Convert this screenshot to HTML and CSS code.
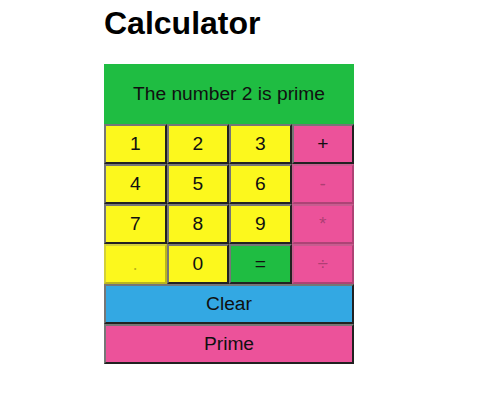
FILE: index.html
```html
<!DOCTYPE html>
<html lang="en">
<head>
<meta charset="utf-8">
<title>Calculator</title>
<link rel="stylesheet" href="styles.css">
</head>
<body>
<main class="app">
  <h1 class="title">Calculator</h1>
  <div class="calc">
    <div class="display">The number 2 is prime</div>
    <div class="keys">
      <button class="key num">1</button>
      <button class="key num">2</button>
      <button class="key num">3</button>
      <button class="key op">+</button>
      <button class="key num">4</button>
      <button class="key num">5</button>
      <button class="key num">6</button>
      <button class="key op" disabled>-</button>
      <button class="key num">7</button>
      <button class="key num">8</button>
      <button class="key num">9</button>
      <button class="key op" disabled>*</button>
      <button class="key num" disabled>.</button>
      <button class="key num">0</button>
      <button class="key eq">=</button>
      <button class="key op" disabled>÷</button>
      <button class="key wide clear">Clear</button>
      <button class="key wide prime">Prime</button>
    </div>
  </div>
</main>
</body>
</html>
```
FILE: styles.css
```css
html, body {
  margin: 0;
  padding: 0;
  background: #ffffff;
}

body {
  font-family: "Liberation Sans", Arial, sans-serif;
  color: #000;
}

.app {
  margin-left: 104px;
  width: 250px;
}

.title {
  font-size: 32px;
  font-weight: bold;
  margin: 5px 0 22px;
  line-height: normal;
}

.calc {
  display: flex;
  flex-direction: column;
}

.display {
  height: 60px;
  background: #1fbd42;
  display: flex;
  align-items: center;
  justify-content: center;
  font-size: 19.2px;
  color: #101010;
}

.keys {
  display: grid;
  grid-template-columns: repeat(4, 1fr);
  grid-auto-rows: 40px;
}

.key {
  font-family: "Liberation Sans", Arial, sans-serif;
  font-size: 19.2px;
  color: #101010;
  border: 2px outset #767676;
  padding: 0;
  margin: 0;
  height: 40px;
  cursor: pointer;
}

.key:disabled {
  color: rgba(16, 16, 16, 0.3);
  border-color: rgba(118, 118, 118, 0.3);
}

.num { background: #fcf81d; }
.op { background: #ec529a; }
.eq { background: #1fbd42; }
.wide { grid-column: 1 / -1; }
.clear { background: #33a8e3; }
.prime { background: #ec529a; }
```
